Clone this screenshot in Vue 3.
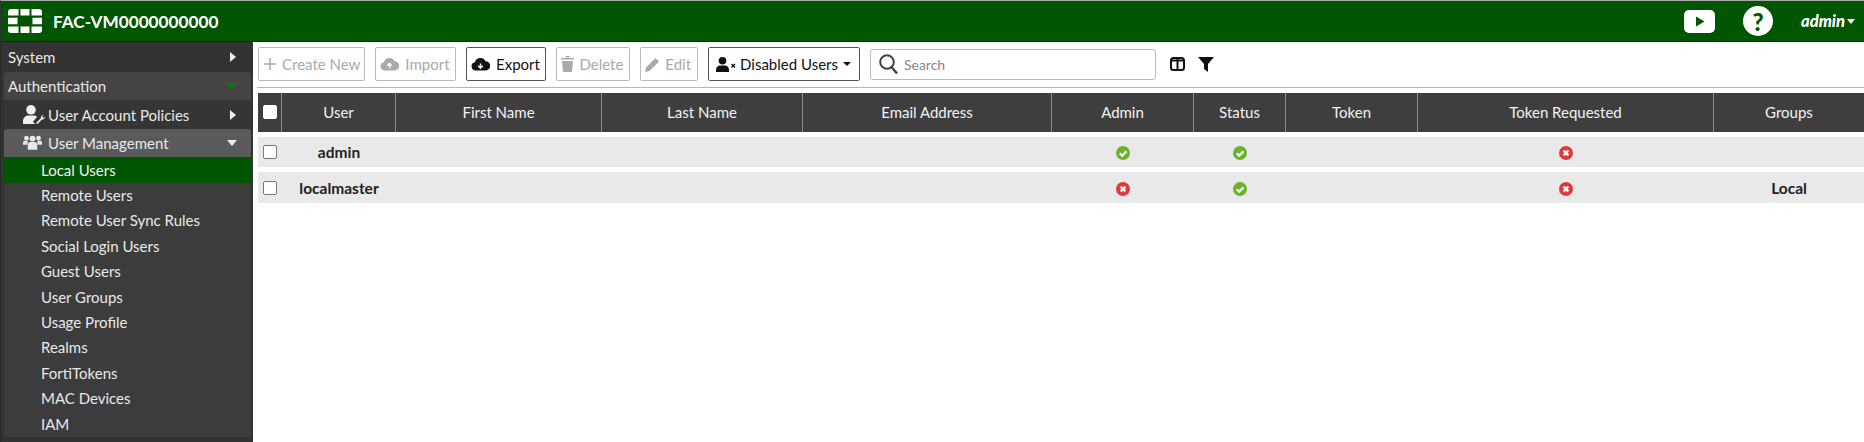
<script setup>
const nav = ['Local Users','Remote Users','Remote User Sync Rules','Social Login Users','Guest Users','User Groups','Usage Profile','Realms','FortiTokens','MAC Devices','IAM']
const cols = ['User','First Name','Last Name','Email Address','Admin','Status','Token','Token Requested','Groups']
const rows = [
  { user:'admin', admin:true, status:true, req:false, groups:'', h:30 },
  { user:'localmaster', admin:false, status:true, req:false, groups:'Local', h:31 },
]
</script>

<template>
  <div class="page">
    <header class="top">
      <svg class="logo" width="34" height="24" viewBox="0 0 34 24">
        <g fill="#fff">
          <path d="M0 6.500V3a3 3 0 0 1 3-3h7.500v6.500z"/><rect x="12.500" y="0" width="9" height="6.500"/><path d="M23.500 0H31a3 3 0 0 1 3 3v3.500H23.500z"/>
          <rect x="0" y="8.750" width="9.500" height="6.500"/><rect x="24.500" y="8.750" width="9.500" height="6.500"/>
          <path d="M0 17.500h10.500V24H3a3 3 0 0 1-3-3z"/><rect x="12.500" y="17.500" width="9" height="6.500"/><path d="M23.500 17.500H34V21a3 3 0 0 1-3 3h-7.500z"/>
        </g>
      </svg>
      <span class="host">FAC-VM0000000000</span>
      <span class="spacer"></span>
      <svg class="yt" width="31" height="23" viewBox="0 0 31 23"><rect width="31" height="23" rx="5" fill="#fff"/><path d="M12 6.500l8.500 5-8.500 5z" fill="#005500"/></svg>
      <span class="help">?</span>
      <span class="me">admin</span><span class="me-caret"></span>
    </header>
    <div class="body">
      <aside class="side">
        <div class="row top-row"><span>System</span><i class="ar"></i></div>
        <div class="row auth"><span>Authentication</span><i class="dn green"></i></div>
        <div class="row sub">
          <svg class="ic" width="22" height="19" viewBox="0 0 22 19"><circle cx="8" cy="4.800" r="4.800" fill="#eee"/><path d="M0 19v-3c0-3.500 3-5.500 5.500-5.500h5c1.500 0 2.700.5 3.600 1.400L10 16.500 12 19z" fill="#eee"/><path d="M13 18l5-5c-.4-1.700.9-3 2.800-3l-1.600 1.800 1.200 1.200L22 11.600c0 2-1.400 3.200-3 2.900l-4.600 4.600z" fill="#eee"/></svg>
          <span>User Account Policies</span><i class="ar"></i>
        </div>
        <div class="row sub mgmt">
          <svg class="ic2" width="19" height="15" viewBox="0 0 22 17"><g fill="#e8e8e8"><circle cx="4" cy="3.500" r="2.700"/><circle cx="18" cy="3.500" r="2.700"/><circle cx="11" cy="4" r="3.400"/><path d="M0 11V8.500C0 7 1 6.500 2 6.500h3.500L5 11z"/><path d="M22 11V8.500c0-1.500-1-2-2-2h-3.500L17 11z"/><path d="M5.500 17v-6c0-2 1.500-3 3-3h5c1.500 0 3 1 3 3v6z"/></g></svg>
          <span>User Management</span><i class="dn"></i>
        </div>
        <ul class="links">
          <li v-for="(n,i) in nav" :key="n" :class="{ on: i===0 }">{{ n }}</li>
        </ul>
      </aside>
      <main class="main">
        <div class="bar">
          <button class="btn off"><svg width="14" height="14" viewBox="0 0 14 14"><path d="M7 1v12M1 7h12" stroke="#aaa" stroke-width="1.500"/></svg>Create New</button>
          <button class="btn off cloud"><svg width="19" height="14" viewBox="0 0 20 15"><path d="M5 14.500a4.500 4.500 0 0 1-1-8.900A6 6 0 0 1 15.300 4.500 5 5 0 0 1 15.500 14.500z" fill="#aaa"/><path d="M10 12V8M7.500 9.500L10 7l2.500 2.500" stroke="#fff" stroke-width="1.500" fill="none"/></svg>Import</button>
          <button class="btn cloud"><svg width="19" height="14" viewBox="0 0 20 15"><path d="M5 14.500a4.500 4.500 0 0 1-1-8.900A6 6 0 0 1 15.300 4.500 5 5 0 0 1 15.500 14.500z" fill="#111"/><path d="M10 7v4M7.500 9.500L10 12l2.500-2.500" stroke="#fff" stroke-width="1.500" fill="none"/></svg>Export</button>
          <button class="btn off wide"><svg width="13" height="16" viewBox="0 0 13 16"><path d="M0 2h13v1.500H0zM4.500 0h4v1.500h-4zM1 5h11l-1 11H2z" fill="#aaa"/></svg>Delete</button>
          <button class="btn off wide"><svg width="15" height="15" viewBox="0 0 15 15"><path d="M0 15l1-4.500L10.500 1l3.500 3.500L4.500 14z" fill="#aaa"/></svg>Edit</button>
          <button class="btn dis"><svg width="20" height="15" viewBox="0 0 20 15"><circle cx="6.500" cy="3.800" r="3.800" fill="#111"/><path d="M0 15v-2c0-3 2-4.500 4-4.500h5c2 0 4 1.500 4 4.500v2z" fill="#111"/><path d="M15.500 7l3.500 3.500m0-3.500l-3.500 3.500" stroke="#111" stroke-width="1.300"/></svg>Disabled Users<i class="caret"></i></button>
          <div class="search">
            <svg width="20" height="21" viewBox="0 0 20 21"><circle cx="8" cy="8" r="6.800" fill="none" stroke="#444" stroke-width="2"/><path d="M12.500 13l5.500 6.500" stroke="#444" stroke-width="2.500"/></svg>
            <span>Search</span>
          </div>
          <svg class="colsi" width="15" height="14" viewBox="0 0 15 14"><rect x="1" y="1" width="13" height="12" rx="2.500" fill="none" stroke="#111" stroke-width="2"/><path d="M1 3.500h13" stroke="#111" stroke-width="2"/><path d="M7.500 2v11" stroke="#111" stroke-width="2"/></svg>
          <svg class="filt" width="16" height="15" viewBox="0 0 16 15"><path d="M0 0h16L10 7v8l-4-3V7z" fill="#111"/></svg>
        </div>
        <div class="rule"></div>
        <div class="grid head">
          <div class="cell chk"><span class="box solid"></span></div>
          <div v-for="c in cols" :key="c" class="cell">{{ c }}</div>
        </div>
        <div v-for="r in rows" :key="r.user" class="grid data" :style="{ height: r.h + 'px' }">
          <div class="cell chk"><span class="box"></span></div>
          <div class="cell b">{{ r.user }}</div>
          <div class="cell"></div><div class="cell"></div><div class="cell"></div>
          <div class="cell"><span class="st">
            <svg v-if="r.admin" width="14" height="14" viewBox="0 0 13 13"><circle cx="6.500" cy="6.500" r="6.500" fill="#6ab42d"/><path d="M3.500 6.800l2.200 2.200 4-4" stroke="#fff" stroke-width="2" fill="none"/></svg>
            <svg v-else width="14" height="14" viewBox="0 0 13 13"><circle cx="6.500" cy="6.500" r="6.500" fill="#de3a3f"/><path d="M4.300 4.300l4.400 4.400m0-4.400L4.300 8.700" stroke="#fff" stroke-width="2"/></svg>
          </span></div>
          <div class="cell"><span class="st"><svg width="14" height="14" viewBox="0 0 13 13"><circle cx="6.500" cy="6.500" r="6.500" fill="#6ab42d"/><path d="M3.500 6.800l2.200 2.200 4-4" stroke="#fff" stroke-width="2" fill="none"/></svg></span></div>
          <div class="cell"></div>
          <div class="cell"><span class="st"><svg width="14" height="14" viewBox="0 0 13 13"><circle cx="6.500" cy="6.500" r="6.500" fill="#de3a3f"/><path d="M4.300 4.300l4.400 4.400m0-4.400L4.300 8.700" stroke="#fff" stroke-width="2"/></svg></span></div>
          <div class="cell b">{{ r.groups }}</div>
        </div>
      </main>
    </div>
  </div>
</template>

<style>
html, body { margin: 0; background: #fff; overflow: hidden; }
</style>
<style scoped>
.page { width: 1864px; height: 442px; font-family: Lato, "Open Sans", sans-serif; font-size: 15px; overflow: hidden; display: flex; flex-direction: column; }
.top { height: 40px; flex: none; background: #005500; border-top: 1px solid #a9a9a9; border-bottom: 1px solid #0f2f0f; border-left: 1px solid #333; display: flex; align-items: center; color: #fff; padding: 0 9px 0 7px; }
.logo { margin-right: 11px; }
.host { font-weight: 700; font-size: 17.200px; }
.spacer { flex: 1; }
.yt { margin-right: 28px; }
.help { width: 30px; height: 30px; border-radius: 50%; background: #fff; color: #005500; font-weight: 900; font-size: 24px; display: flex; align-items: center; justify-content: center; margin-right: 28px; }
.me { font-weight: 900; font-style: italic; font-size: 16.500px; }
.me-caret { width: 0; height: 0; border: 4.500px solid transparent; border-top: 5px solid #fff; border-bottom: 0; margin-left: 2px; }
.body { flex: 1; display: flex; min-height: 0; }
.side { width: 253px; flex: none; background: #333; color: #e9e9e9; box-sizing: border-box; padding: 0 2px 0 3px; border-left: 1px solid #2a2a2a; }
.row { display: flex; align-items: center; justify-content: space-between; box-sizing: border-box; padding: 0 15px 1px 4px; }
.top-row { height: 30px; }
.auth { height: 28px; background: #444; border-radius: 3px 3px 0 0; }
.sub { height: 29px; padding-left: 19px; padding-bottom: 0; justify-content: flex-start; background: #353535; }
.sub .ar, .sub .dn { margin-left: auto; }
.mgmt { height: 28px; background: #5a5a5a; border-radius: 3px 3px 0 0; padding-bottom: 1px; }
.ic { margin-right: 3px; flex: none; }
.ic2 { margin-right: 6px; flex: none; }
.ar { width: 0; height: 0; border-left: 6px solid #eee; border-top: 5px solid transparent; border-bottom: 5px solid transparent; }
.dn { width: 0; height: 0; border-top: 6px solid #eee; border-left: 5px solid transparent; border-right: 5px solid transparent; margin-right: -1px; }
.dn.green { border-top-color: #0b7a0b; }
.links { list-style: none; margin: 0; padding: 0; }
.links li { height: 25.400px; line-height: 25.400px; padding-left: 37px; background: #3c3c3c; }
.links li.on { height: 26px; line-height: 26px; background: #005500; color: #f0f0f0; }
.main { flex: 1; min-width: 0; padding-left: 5px; }
.bar { height: 45px; display: flex; align-items: center; box-sizing: border-box; padding-top: 5px; padding-bottom: 6px; }
.btn { height: 34px; box-sizing: border-box; border: 1px solid #555; background: #fff; border-radius: 2px; font: inherit; color: #111; display: flex; align-items: center; gap: 5px; padding: 0 4px; margin-right: 10px; }
.btn.off { border-color: #bbb; color: #aaa; }
.btn.cloud { padding: 0 5.500px 0 4px; gap: 6px; }
.btn.wide { padding: 0 6px 0 4px; }
.btn.dis { padding: 0 8px 0 7px; gap: 4px; }
.caret { width: 0; height: 0; border-top: 4.500px solid #111; border-left: 4.500px solid transparent; border-right: 4.500px solid transparent; margin-left: 1px; }
.search { width: 286px; height: 31px; box-sizing: border-box; border: 1px solid #bbb; border-radius: 3px; display: flex; align-items: center; gap: 5px; padding-left: 8px; color: #888; font-size: 14px; }
.colsi { margin-left: 14px; }
.filt { margin-left: 13px; }
.rule { height: 1px; background: #b5b5b5; margin-left: -1px; margin-bottom: 5px; }
.grid { display: grid; grid-template-columns: 24px 114px 206px 201px 249px 142px 92px 132px 296px 150px; }
.head { height: 39px; background: #3e3e3e; color: #f2f2f2; margin-bottom: 5px; }
.head .cell { border-right: 1px solid #8a8a8a; padding-bottom: 2px; }
.head .cell:last-child { border-right: 0; }
.data { background: #e9e9e9; margin-bottom: 5px; color: #222; }
.cell { display: flex; align-items: center; justify-content: center; box-sizing: border-box; min-width: 0; }
.b { font-weight: 700; font-size: 15.500px; }
.st { display: flex; margin-top: 2px; }
.box { width: 14px; height: 14px; border: 1px solid #777; border-radius: 2px; background: #fff; box-sizing: border-box; }
.box.solid { border-color: #fff; }
</style>
